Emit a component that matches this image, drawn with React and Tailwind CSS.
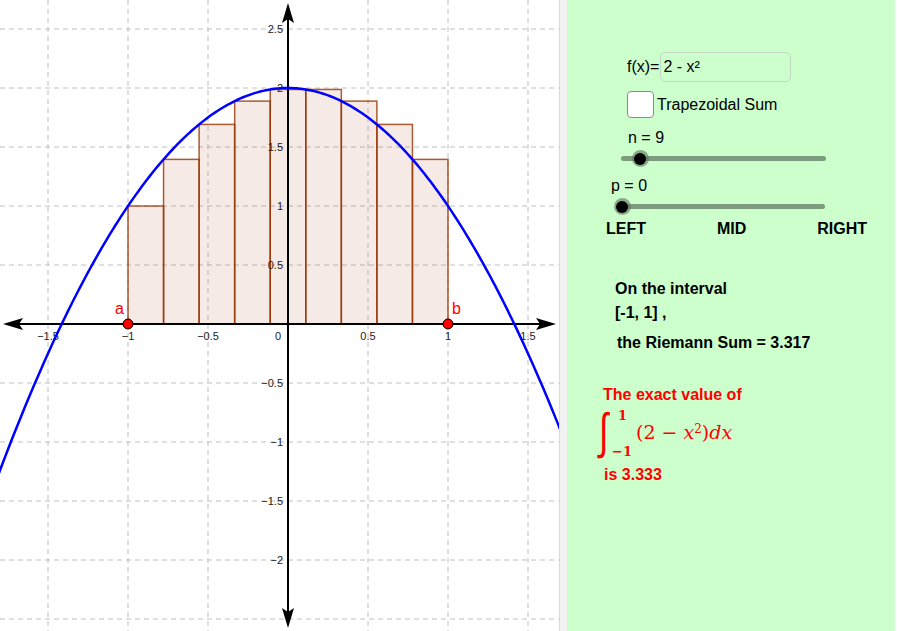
import React from 'react';

// graph coordinates: origin at (288, 324), 160px per x unit, 118px per y unit
const OX = 288;
const OY = 324;
const SX = 160;
const SY = 118;
const px = (x) => OX + x * SX;
const py = (y) => OY - y * SY;
const f = (x) => 2 - x * x;

const N = 9;
const A = -1;
const B = 1;
const DX = (B - A) / N;

const rects = Array.from({ length: N }, (_, i) => {
  const x = A + i * DX;
  return { x: px(x), w: DX * SX, top: py(f(x)) };
});

const curve = (() => {
  const pts = [];
  for (let i = 0; i <= 200; i++) {
    const x = -1.82 + (i / 200) * 3.54;
    pts.push(`${px(x).toFixed(2)},${py(f(x)).toFixed(2)}`);
  }
  return 'M' + pts.join(' L');
})();

const gridX = [-1.5, -1, -0.5, 0, 0.5, 1, 1.5];
const gridY = [2.5, 2, 1.5, 1, 0.5, 0, -0.5, -1, -1.5, -2, -2.5];
const xLabels = [
  ['\u22121.5', -1.5],
  ['\u22121', -1],
  ['\u22120.5', -0.5],
  ['0.5', 0.5],
  ['1', 1],
  ['1.5', 1.5],
];
const yLabels = [
  ['2.5', 2.5],
  ['2', 2],
  ['1.5', 1.5],
  ['1', 1],
  ['0.5', 0.5],
  ['\u22120.5', -0.5],
  ['\u22121', -1],
  ['\u22121.5', -1.5],
  ['\u22122', -2],
];

function Graph() {
  return (
    <svg width="559" height="631" viewBox="0 0 559 631" className="block shrink-0 bg-white">
      {/* grid */}
      <g stroke="#c0c0c0" strokeWidth="1" strokeDasharray="5 4">
        {gridX.filter((x) => x !== 0).map((x) => (
          <line key={'gx' + x} x1={px(x)} y1="0" x2={px(x)} y2="631" />
        ))}
        {gridY.filter((y) => y !== 0).map((y) => (
          <line key={'gy' + y} x1="0" y1={py(y)} x2="559" y2={py(y)} />
        ))}
      </g>

      {/* left riemann rectangles */}
      <g fill="#993300" fillOpacity="0.1" stroke="#993300" strokeOpacity="0.8" strokeWidth="1.5">
        {rects.map((r, i) => (
          <rect key={i} x={r.x} y={r.top} width={r.w} height={OY - r.top} />
        ))}
      </g>

      {/* axes */}
      <g stroke="#000" strokeWidth="2">
        <line x1="14" y1={OY} x2="546" y2={OY} />
        <line x1={OX} y1="14" x2={OX} y2="617" />
      </g>
      <g fill="#000">
        <polygon points={`556,${OY} 536,${OY - 6} 540,${OY} 536,${OY + 6}`} />
        <polygon points={`3,${OY} 23,${OY - 6} 19,${OY} 23,${OY + 6}`} />
        <polygon points={`${OX},3 ${OX - 6},23 ${OX},19 ${OX + 6},23`} />
        <polygon points={`${OX},628 ${OX - 6},608 ${OX},612 ${OX + 6},608`} />
      </g>

      {/* tick labels */}
      <g fontFamily="'Liberation Sans', Arial, sans-serif" fontSize="11" fill="#222">
        {xLabels.map(([t, x]) => (
          <text key={'xl' + t} x={px(x)} y={OY + 16} textAnchor="middle">{t}</text>
        ))}
        <text x={OX - 10} y={OY + 16} textAnchor="middle">0</text>
        {yLabels.map(([t, y]) => (
          <text key={'yl' + t} x={OX - 5} y={py(y) + 4} textAnchor="end">{t}</text>
        ))}
      </g>

      {/* function */}
      <path d={curve} fill="none" stroke="#0000ff" strokeWidth="2.5" />

      {/* endpoints */}
      <circle cx={px(A)} cy={OY} r="5" fill="#ff0000" stroke="#000" strokeWidth="1" />
      <circle cx={px(B)} cy={OY} r="5" fill="#ff0000" stroke="#000" strokeWidth="1" />
      <g fontFamily="'Liberation Sans', Arial, sans-serif" fontSize="16" fill="#ff0000">
        <text x={px(A) - 13} y={OY - 10}>a</text>
        <text x={px(B) + 4} y={OY - 10}>b</text>
      </g>
    </svg>
  );
}

function Slider({ left, width, knob }) {
  return (
    <div className="relative h-[16px]" style={{ marginLeft: left, width }}>
      <div className="absolute left-0 right-0 top-[5.5px] h-[5px] rounded-full bg-[#7d9b7d]" />
      <div
        className="absolute top-0 w-[17px] h-[17px] -ml-[8.5px] rounded-full bg-[#5f6f5f]/60 flex items-center justify-center"
        style={{ left: knob }}
      >
        <div className="w-[12px] h-[12px] rounded-full bg-black" />
      </div>
    </div>
  );
}

function Panel() {
  return (
    <div className="w-[328px] h-[631px] shrink-0 bg-[#ccffcc] text-black text-[16px] leading-[18px] font-['Liberation_Sans',Arial,sans-serif]">
      <div className="mt-[52px] h-[30px] ml-[60px] flex items-center">
        <span>f(x)=</span>
        <div className="ml-[1px] -mt-[1px] w-[131px] h-[30px] rounded-[5px] border border-[#c4d6c4] flex items-center pl-[2px]">
          2 - x²
        </div>
      </div>

      <div className="mt-[9px] h-[27px] ml-[60px] flex items-center">
        <div className="w-[27px] h-[27px] rounded-[4px] border border-[#8a8a8a] bg-white" />
        <span className="ml-[3px]">Trapezoidal Sum</span>
      </div>

      <div className="mt-[11px] h-[18px] ml-[61px]">n = 9</div>
      <div className="mt-[3px]">
        <Slider left={54} width={205} knob={19} />
      </div>

      <div className="mt-[11px] h-[18px] ml-[44px]">p = 0</div>
      <div className="mt-[3px]">
        <Slider left={50} width={208} knob={5} />
      </div>

      <div className="mt-[6px] h-[18px] ml-[39px] w-[261px] flex justify-between font-bold">
        <span>LEFT</span>
        <span>MID</span>
        <span>RIGHT</span>
      </div>

      <div className="mt-[42px] h-[18px] ml-[48px] font-bold">On the interval</div>
      <div className="mt-[6px] h-[18px] ml-[48px] font-bold">[-1, 1] ,</div>
      <div className="mt-[12px] h-[18px] ml-[50px] font-bold">the Riemann Sum = 3.317</div>

      <div className="mt-[34px] h-[18px] ml-[36px] font-bold text-[#ff0000]">The exact value of</div>

      <div className="mt-[3px] h-[50px] ml-[33px] flex items-center text-[#ff0000] font-['DejaVu_Serif','Liberation_Serif',serif]">
        <div className="relative w-[34px] h-[50px]">
          <span className="absolute left-[-1px] top-[0px] w-[14px] overflow-visible text-[34px] leading-[48px] font-['DejaVu_Sans',sans-serif] font-extralight scale-y-[1.45] origin-center">∫</span>
          <span className="absolute left-[18px] top-[2px] text-[13px] leading-[13px] font-bold">1</span>
          <span className="absolute left-[12px] top-[38px] text-[13px] leading-[13px] font-bold">−1</span>
        </div>
        <span className="ml-[2px] text-[19px] leading-[20px]">
          (2 − <i>x</i><sup className="text-[12px]">2</sup>)<i>dx</i>
        </span>
      </div>

      <div className="mt-[9px] h-[18px] ml-[37px] font-bold text-[#ff0000]">is 3.333</div>
    </div>
  );
}

export default function App() {
  return (
    <div className="w-[897px] h-[631px] flex bg-white overflow-hidden">
      <Graph />
      <div className="w-[8px] h-[631px] shrink-0 bg-[#f2f2f2] border-l border-[#dadada]" />
      <Panel />
      <div className="flex-1 bg-white" />
    </div>
  );
}
